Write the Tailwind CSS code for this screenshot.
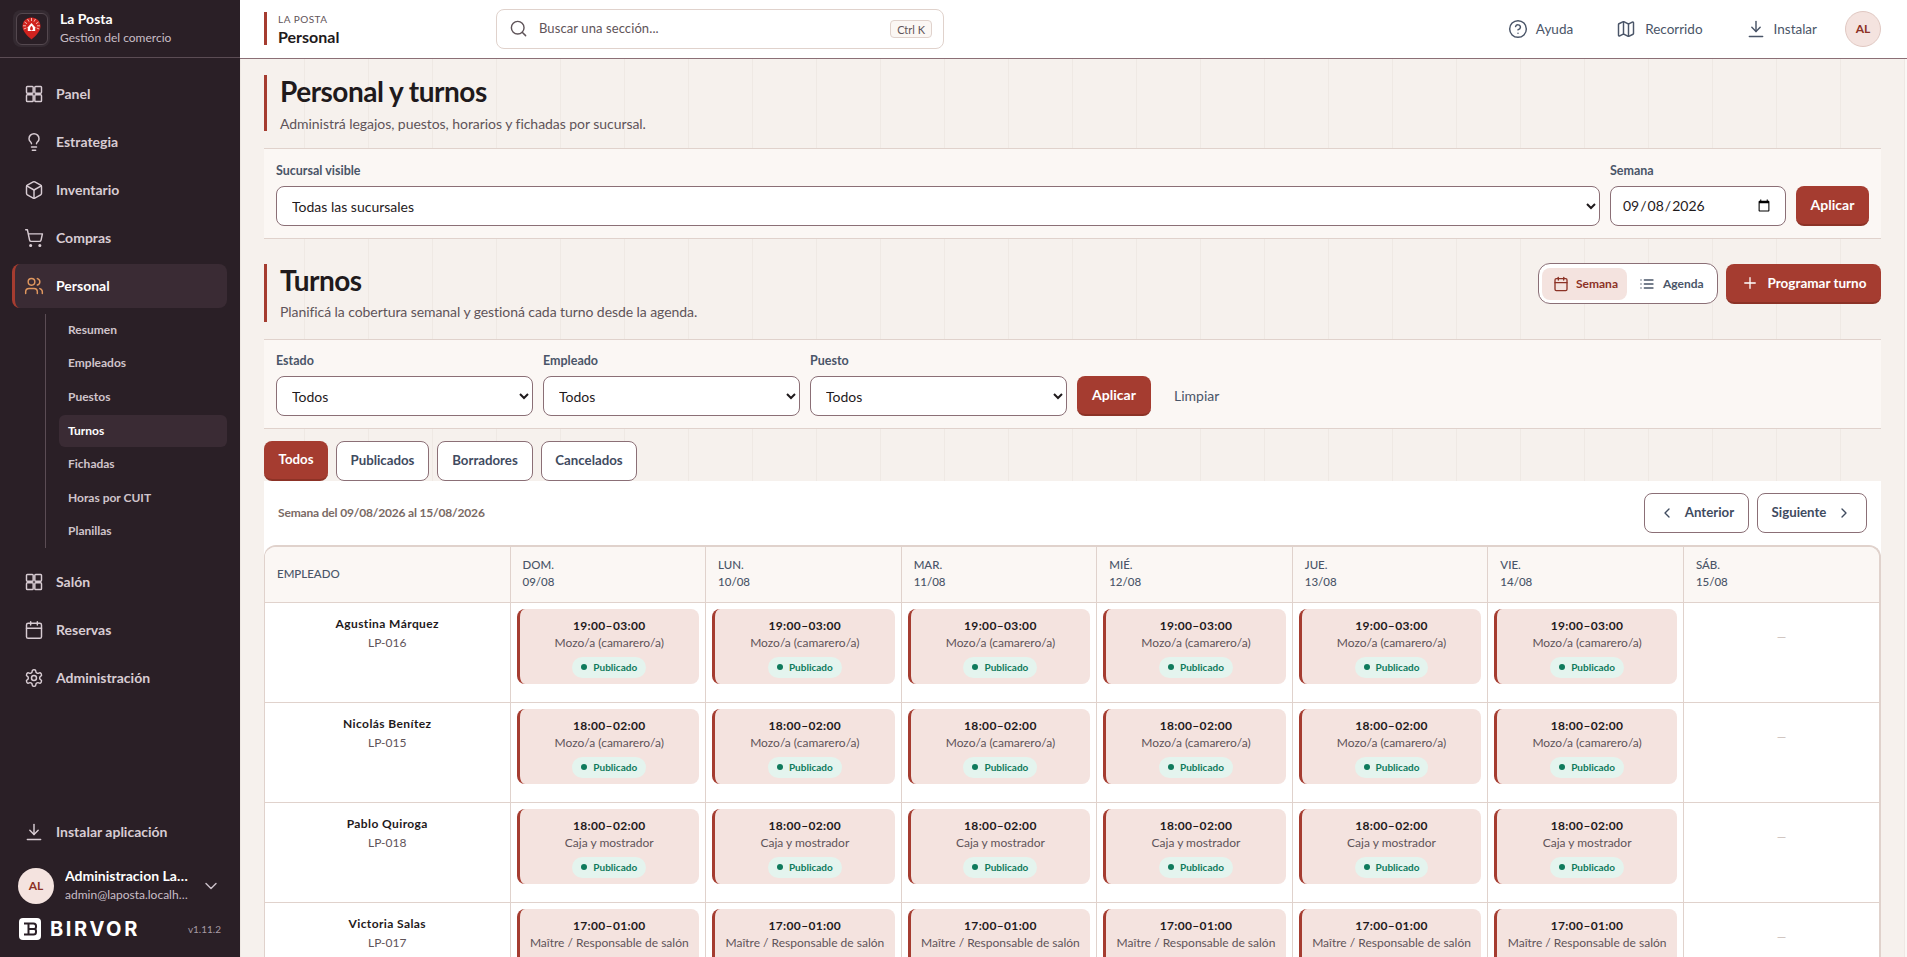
<!DOCTYPE html>
<html lang="es">
<head>
    <meta charset="UTF-8">
    <meta name="viewport" content="width=device-width, initial-scale=1.0">
    <title>Personal y turnos</title>
    <script src="https://cdn.jsdelivr.net/npm/@tailwindcss/browser@4"></script>
</head>
<body class="font-['Lato',sans-serif] h-screen overflow-hidden bg-white flex text-[#1f1a1c]">
    <!-- Sidebar -->
    <aside class="w-[240px] shrink-0 h-full bg-[#2a1f26] flex flex-col">
        <div class="h-[58px] shrink-0 border-b border-[#5b4c54] flex items-center pl-[13px] gap-[10px]">
            <div class="w-[37px] h-[37px] rounded-lg bg-[#342a31] flex items-center justify-center">
                <div class="w-[32px] h-[32px] rounded-md border border-[#54484f] bg-[#2a1f26] flex items-center justify-center">
                    <svg width="19" height="23" viewBox="0 0 19 23"><path d="M9.5 0.5C4.3 0.5 0.5 4.3 0.5 9.3c0 5.200 5 9.800 9 13.200 4-3.400 9-8 9-13.200C18.500 4.300 14.700 0.500 9.500 0.500z" fill="#d0231f"/><path d="M9.500 1v3M5.500 2l1.500 2.600M13.500 2l-1.500 2.600M2.500 5l2.500 1.700M16.500 5 14 6.700M1 8.800h3M18 8.800h-3M1.800 12l2.500-1M17.200 12l-2.500-1" stroke="#f6c9c0" stroke-width="0.900"/><path d="M5.800 14V10.200l3.700-4.200 3.700 4.200V14z" fill="#fff"/><path d="M9.500 8.800c-.9 1.200-1.400 2-1.400 3 0 .9.600 1.700 1.400 1.700s1.400-.8 1.400-1.700c0-1-.5-1.800-1.400-3z" fill="#d0231f"/></svg>
                </div>
            </div>
            <div>
                <div class="text-sm font-bold text-white leading-[18px]">La Posta</div>
                <div class="text-xs text-[#c9bec6] leading-[18px] mt-[1px]">Gestión del comercio</div>
            </div>
        </div>

        <nav class="flex-1 pt-[14px] pl-[12px] pr-[13px] text-sm font-bold text-[#d8ccd3]">
            <a class="h-11 mb-1 flex items-center gap-[12px] pl-[12px]">
                <svg class="w-[20px] h-[20px]" viewBox="0 0 24 24" fill="none" stroke="currentColor" stroke-width="1.750" stroke-linecap="round" stroke-linejoin="round"><rect width="8" height="8" x="3" y="3" rx="1"/><rect width="8" height="8" x="13" y="3" rx="1"/><rect width="8" height="8" x="13" y="13" rx="1"/><rect width="8" height="8" x="3" y="13" rx="1"/></svg>
                Panel
            </a>
            <a class="h-11 mb-1 flex items-center gap-[12px] pl-[12px]">
                <svg class="w-[20px] h-[20px]" viewBox="0 0 24 24" fill="none" stroke="currentColor" stroke-width="1.750" stroke-linecap="round" stroke-linejoin="round"><path d="M15 14c.2-1 .7-1.700 1.500-2.500 1-.9 1.500-2.200 1.500-3.500A6 6 0 0 0 6 8c0 1 .2 2.200 1.500 3.500.7.700 1.300 1.500 1.500 2.500"/><path d="M9 18h6"/><path d="M10 22h4"/></svg>
                Estrategia
            </a>
            <a class="h-11 mb-1 flex items-center gap-[12px] pl-[12px]">
                <svg class="w-[20px] h-[20px]" viewBox="0 0 24 24" fill="none" stroke="currentColor" stroke-width="1.750" stroke-linecap="round" stroke-linejoin="round"><path d="M21 8a2 2 0 0 0-1-1.730l-7-4a2 2 0 0 0-2 0l-7 4A2 2 0 0 0 3 8v8a2 2 0 0 0 1 1.730l7 4a2 2 0 0 0 2 0l7-4A2 2 0 0 0 21 16Z"/><path d="m3.300 7 8.700 5 8.700-5"/><path d="M12 22V12"/></svg>
                Inventario
            </a>
            <a class="h-11 mb-1 flex items-center gap-[12px] pl-[12px]">
                <svg class="w-[20px] h-[20px]" viewBox="0 0 24 24" fill="none" stroke="currentColor" stroke-width="1.750" stroke-linecap="round" stroke-linejoin="round"><circle cx="8" cy="21" r="1"/><circle cx="19" cy="21" r="1"/><path d="M2.050 2.050h2l2.660 12.420a2 2 0 0 0 2 1.580h9.780a2 2 0 0 0 1.950-1.570l1.650-7.430H5.120"/></svg>
                Compras
            </a>
            <a class="h-11 flex items-center gap-[12px] pl-[9px] bg-[#3a2b34] rounded-lg border-l-[3px] border-[#a53c30] text-white">
                <svg class="w-[20px] h-[20px] text-[#e0975f]" viewBox="0 0 24 24" fill="none" stroke="currentColor" stroke-width="1.750" stroke-linecap="round" stroke-linejoin="round"><path d="M16 21v-2a4 4 0 0 0-4-4H6a4 4 0 0 0-4 4v2"/><circle cx="9" cy="7" r="4"/><path d="M22 21v-2a4 4 0 0 0-3-3.870"/><path d="M16 3.130a4 4 0 0 1 0 7.750"/></svg>
                Personal
            </a>

            <div class="mt-[6px] ml-[33px] border-l border-[#5b4c54] pl-[13px] h-[234px] flex flex-col text-xs text-[#d0c4cb]">
                <a class="h-[33.600px] -mt-[1px] shrink-0 flex items-center pl-[9px]">Resumen</a>
                <a class="h-[33.600px] shrink-0 flex items-center pl-[9px]">Empleados</a>
                <a class="h-[33.600px] shrink-0 flex items-center pl-[9px]">Puestos</a>
                <a class="h-[32px] my-[0.800px] shrink-0 flex items-center pl-[9px] bg-[#3a2b34] rounded-md text-white">Turnos</a>
                <a class="h-[33.600px] shrink-0 flex items-center pl-[9px]">Fichadas</a>
                <a class="h-[33.600px] shrink-0 flex items-center pl-[9px]">Horas por CUIT</a>
                <a class="h-[33.600px] shrink-0 flex items-center pl-[9px]">Planillas</a>
            </div>

            <a class="h-11 mt-[12px] mb-1 flex items-center gap-[12px] pl-[12px]">
                <svg class="w-[20px] h-[20px]" viewBox="0 0 24 24" fill="none" stroke="currentColor" stroke-width="1.750" stroke-linecap="round" stroke-linejoin="round"><rect width="8" height="8" x="3" y="3" rx="1"/><rect width="8" height="8" x="13" y="3" rx="1"/><rect width="8" height="8" x="13" y="13" rx="1"/><rect width="8" height="8" x="3" y="13" rx="1"/></svg>
                Salón
            </a>
            <a class="h-11 mb-1 flex items-center gap-[12px] pl-[12px]">
                <svg class="w-[20px] h-[20px]" viewBox="0 0 24 24" fill="none" stroke="currentColor" stroke-width="1.750" stroke-linecap="round" stroke-linejoin="round"><path d="M8 2v4"/><path d="M16 2v4"/><rect width="18" height="18" x="3" y="4" rx="2"/><path d="M3 10h18"/></svg>
                Reservas
            </a>
            <a class="h-11 flex items-center gap-[12px] pl-[12px]">
                <svg class="w-[20px] h-[20px]" viewBox="0 0 24 24" fill="none" stroke="currentColor" stroke-width="1.750" stroke-linecap="round" stroke-linejoin="round"><path d="M12.220 2h-.44a2 2 0 0 0-2 2v.18a2 2 0 0 1-1 1.730l-.43.25a2 2 0 0 1-2 0l-.15-.08a2 2 0 0 0-2.730.73l-.22.38a2 2 0 0 0 .73 2.730l.15.1a2 2 0 0 1 1 1.720v.51a2 2 0 0 1-1 1.740l-.15.09a2 2 0 0 0-.73 2.730l.22.38a2 2 0 0 0 2.730.73l.15-.08a2 2 0 0 1 2 0l.43.25a2 2 0 0 1 1 1.730V20a2 2 0 0 0 2 2h.44a2 2 0 0 0 2-2v-.18a2 2 0 0 1 1-1.730l.43-.25a2 2 0 0 1 2 0l.15.08a2 2 0 0 0 2.730-.73l.22-.39a2 2 0 0 0-.73-2.730l-.15-.08a2 2 0 0 1-1-1.740v-.5a2 2 0 0 1 1-1.740l.15-.09a2 2 0 0 0 .73-2.730l-.22-.38a2 2 0 0 0-2.730-.73l-.15.08a2 2 0 0 1-2 0l-.43-.25a2 2 0 0 1-1-1.730V4a2 2 0 0 0-2-2z"/><circle cx="12" cy="12" r="3"/></svg>
                Administración
            </a>
        </nav>

        <div class="shrink-0 h-[147px] px-[18px] relative">
            <a class="h-[44px] flex items-center gap-[12px] pl-[6px] text-sm font-bold text-[#d8ccd3]">
                <svg class="w-[20px] h-[20px]" viewBox="0 0 24 24" fill="none" stroke="currentColor" stroke-width="1.750" stroke-linecap="round" stroke-linejoin="round"><path d="M12 3v12"/><path d="m7 10 5 5 5-5"/><path d="M4 21h16"/></svg>
                Instalar aplicación
            </a>
            <div class="mt-[13px] flex items-center">
                <div class="w-[36px] h-[36px] rounded-full bg-[#f4e3df] flex items-center justify-center text-xs font-bold text-[#8c3226]">AL</div>
                <div class="ml-[11px] w-[125px]">
                    <div class="text-sm font-bold text-white leading-[18px] truncate">Administracion La Posta</div>
                    <div class="text-xs text-[#c9bec6] leading-[18px] mt-[1px] truncate">admin@laposta.localhost</div>
                </div>
                <svg class="w-[20px] h-[20px] ml-[11px] text-[#c9bec6]" viewBox="0 0 24 24" fill="none" stroke="currentColor" stroke-width="1.750" stroke-linecap="round" stroke-linejoin="round"><path d="m6 9 6 6 6-6"/></svg>
            </div>
            <div class="mt-[14px] flex items-center">
                <svg class="w-[22px] h-[22px] ml-[1px]" viewBox="0 0 22 22"><rect width="22" height="22" rx="4" fill="#fff"/><path d="M5 5.500h9.500a2.500 2.500 0 0 1 2.500 2.500v1a2 2 0 0 1-2 2H9M15 11a2 2 0 0 1 2 2v1a2.500 2.500 0 0 1-2.500 2.500H5M9.500 5.500v11" fill="none" stroke="#2a1f26" stroke-width="2"/></svg>
                <span class="ml-[9px] text-[20px] leading-none font-bold tracking-[2.600px] text-white font-['Inter',sans-serif]">BIRVOR</span>
                <span class="ml-auto text-[10px] text-[#a79aa3] mr-[1px]">v1.11.2</span>
            </div>
        </div>
    </aside>

    <!-- Main column -->
    <div class="flex-1 min-w-0 h-full flex flex-col">
        <header class="h-[59px] shrink-0 bg-white border-b border-[#8b6f76] flex items-center pl-[24px] pr-[26px]">
            <div class="border-l-[3px] border-[#a53c30] pl-[11px] h-[33px] -mt-[1px] w-[232px] flex flex-col justify-center">
                <div class="text-[10px] tracking-[0.500px] text-[#5f5459] leading-[15px]">LA POSTA</div>
                <div class="text-base font-bold leading-[19px]">Personal</div>
            </div>
            <div class="w-[448px] h-[40px] -mt-[1px] rounded-lg border border-[#e0d2cc] flex items-center pl-[12px] pr-[11px]">
                <svg class="w-[19px] h-[19px] text-[#5f5459]" viewBox="0 0 24 24" fill="none" stroke="currentColor" stroke-width="1.800" stroke-linecap="round" stroke-linejoin="round"><circle cx="11" cy="11" r="8"/><path d="m21 21-4.300-4.300"/></svg>
                <span class="ml-[11px] text-[13px] tracking-[0.100px] text-[#5f5459]">Buscar una sección...</span>
                <span class="ml-auto text-[11px] px-[6px] h-[18px] leading-[17px] rounded border border-[#e0d2cc] bg-[#fbf7f4] text-[#5f5459]">Ctrl K</span>
            </div>
            <div class="ml-auto flex items-center text-[13.500px] text-[#4a5568]">
                <svg class="w-[20px] h-[20px]" viewBox="0 0 24 24" fill="none" stroke="currentColor" stroke-width="1.750" stroke-linecap="round" stroke-linejoin="round"><circle cx="12" cy="12" r="10"/><path d="M9.090 9a3 3 0 0 1 5.830 1c0 2-3 3-3 3"/><path d="M12 17h.010"/></svg>
                <span class="ml-[8px]">Ayuda</span>
                <svg class="w-[20px] h-[20px] ml-[43px]" viewBox="0 0 24 24" fill="none" stroke="currentColor" stroke-width="1.750" stroke-linecap="round" stroke-linejoin="round"><path d="M14.106 5.553a2 2 0 0 0 1.788 0l3.659-1.830A1 1 0 0 1 21 4.619v12.764a1 1 0 0 1-.553.894l-4.553 2.277a2 2 0 0 1-1.788 0l-4.212-2.106a2 2 0 0 0-1.788 0l-3.659 1.830A1 1 0 0 1 3 19.381V6.618a1 1 0 0 1 .553-.894l4.553-2.277a2 2 0 0 1 1.788 0z"/><path d="M15 5.764v15"/><path d="M9 3.236v15"/></svg>
                <span class="ml-[9px]">Recorrido</span>
                <svg class="w-[20px] h-[20px] ml-[43px]" viewBox="0 0 24 24" fill="none" stroke="currentColor" stroke-width="1.750" stroke-linecap="round" stroke-linejoin="round"><path d="M12 3v12"/><path d="m7 10 5 5 5-5"/><path d="M4 21h16"/></svg>
                <span class="ml-[8px]">Instalar</span>
                <div class="ml-[28px] w-[36px] h-[36px] rounded-full bg-[#f4e3df] border border-[#e0c8c2] flex items-center justify-center text-xs font-bold text-[#8c3226]">AL</div>
            </div>
        </header>

        <main class="flex-1 min-h-0 overflow-hidden pl-[24px] pr-[24px] bg-[#f6f1ed] bg-[linear-gradient(to_right,#efe9e4_1px,transparent_1px)] bg-[size:64px_64px] border-r-2 border-[#fbf8f6]">
            <section class="mt-[18px] h-[56px] border-l-[3px] border-[#a53c30] pl-[13px]">
                <h1 class="text-[28px] font-bold leading-[32px] tracking-[-0.500px] -mt-[2px]">Personal y turnos</h1>
                <p class="text-sm tracking-[-0.050px] text-[#5f5459] leading-[20px] mt-[7px]">Administrá legajos, puestos, horarios y fichadas por sucursal.</p>
            </section>

            <form class="mt-[17px] h-[91px] bg-[#fbf7f4] border-y border-[#e0d2cc] px-[12px] flex items-end pb-[12px] gap-[10px]">
                <label class="flex-1 block">
                    <span class="block text-[12.500px] font-bold text-[#4a5568] leading-[16px] mb-[7px]">Sucursal visible</span>
                    <select class="w-full h-[40px] rounded-lg border border-[#8b6f76] bg-white pl-[11px] text-sm"><option>Todas las sucursales</option></select>
                </label>
                <label class="w-[176px] block">
                    <span class="block text-[12.500px] font-bold text-[#4a5568] leading-[16px] mb-[7px]">Semana</span>
                    <input type="date" value="2026-09-08" class="w-full h-[40px] rounded-lg border border-[#8b6f76] bg-white pl-[11px] pr-[12px] text-sm">
                </label>
                <button type="button" class="w-[73px] h-[40px] rounded-lg bg-[#a53c30] border-b-2 border-[#8c3226] text-white text-sm font-bold">Aplicar</button>
            </form>

            <section class="mt-[25px] h-[58px] flex items-start">
                <div class="flex-1 border-l-[3px] border-[#a53c30] pl-[13px] h-[58px]">
                    <h2 class="text-[28px] font-bold leading-[32px] tracking-[-0.500px]">Turnos</h2>
                    <p class="text-sm tracking-[-0.070px] text-[#5f5459] leading-[20px] mt-[6px]">Planificá la cobertura semanal y gestioná cada turno desde la agenda.</p>
                </div>
                <div class="w-[180px] h-[41px] -mt-[1px] rounded-xl border border-[#8b6f76] bg-white flex items-center pl-[3px] text-xs font-bold">
                    <span class="w-[85px] h-[32px] rounded-lg bg-[#f4e3df] text-[#8c3226] flex items-center pl-[11px] gap-[7px]">
                        <svg class="w-[16px] h-[16px]" viewBox="0 0 24 24" fill="none" stroke="currentColor" stroke-width="2" stroke-linecap="round" stroke-linejoin="round"><path d="M8 2v4"/><path d="M16 2v4"/><rect width="18" height="18" x="3" y="4" rx="2"/><path d="M3 10h18"/></svg>
                        Semana
                    </span>
                    <span class="flex items-center pl-[12px] gap-[8px] text-[#4a5568]">
                        <svg class="w-[16px] h-[16px]" viewBox="0 0 24 24" fill="none" stroke="currentColor" stroke-width="2" stroke-linecap="round" stroke-linejoin="round"><path d="M3 6h.010"/><path d="M8 6h13"/><path d="M3 12h.010"/><path d="M8 12h13"/><path d="M3 18h.010"/><path d="M8 18h13"/></svg>
                        Agenda
                    </span>
                </div>
                <button type="button" class="ml-[8px] w-[155px] h-[40px] rounded-lg bg-[#a53c30] border-b-2 border-[#8c3226] text-white text-[13.500px] font-bold flex items-center justify-center gap-[9px]">
                    <svg class="w-[18px] h-[18px]" viewBox="0 0 24 24" fill="none" stroke="currentColor" stroke-width="1.750" stroke-linecap="round" stroke-linejoin="round"><path d="M5 12h14"/><path d="M12 5v14"/></svg>
                    Programar turno
                </button>
            </section>

            <form class="mt-[17px] h-[90px] bg-[#fbf7f4] border-y border-[#e0d2cc] px-[12px] flex items-end pb-[12px] gap-[10px]">
                <label class="w-[257px] block">
                    <span class="block text-[12.500px] font-bold text-[#4a5568] leading-[16px] mb-[7px]">Estado</span>
                    <select class="w-full h-[40px] rounded-lg border border-[#8b6f76] bg-white pl-[11px] text-sm"><option>Todos</option></select>
                </label>
                <label class="w-[257px] block">
                    <span class="block text-[12.500px] font-bold text-[#4a5568] leading-[16px] mb-[7px]">Empleado</span>
                    <select class="w-full h-[40px] rounded-lg border border-[#8b6f76] bg-white pl-[11px] text-sm"><option>Todos</option></select>
                </label>
                <label class="w-[257px] block">
                    <span class="block text-[12.500px] font-bold text-[#4a5568] leading-[16px] mb-[7px]">Puesto</span>
                    <select class="w-full h-[40px] rounded-lg border border-[#8b6f76] bg-white pl-[11px] text-sm"><option>Todos</option></select>
                </label>
                <button type="button" class="w-[74px] h-[40px] rounded-lg bg-[#a53c30] border-b-2 border-[#8c3226] text-white text-sm font-bold">Aplicar</button>
                <span class="ml-[13px] h-[40px] flex items-center text-sm text-[#4a5568]">Limpiar</span>
            </form>

            <div class="mt-[12px] flex gap-[8px] text-[13.250px] font-bold text-[#3f4b5f]">
                <span class="w-[64px] h-[40px] rounded-lg bg-[#a53c30] border-b-2 border-[#8c3226] text-white flex items-center justify-center">Todos</span>
                <span class="w-[93px] h-[40px] rounded-lg bg-white border border-[#8b6f76] flex items-center justify-center">Publicados</span>
                <span class="w-[96px] h-[40px] rounded-lg bg-white border border-[#8b6f76] flex items-center justify-center">Borradores</span>
                <span class="w-[96px] h-[40px] rounded-lg bg-white border border-[#8b6f76] flex items-center justify-center">Cancelados</span>
            </div>

            <div class="bg-white">
                <div class="h-[64px] flex items-center pl-[14px] pr-[14px]">
                    <span class="text-xs font-bold tracking-[-0.170px] text-[#7a6a65]">Semana del 09/08/2026 al 15/08/2026</span>
                    <span class="ml-auto w-[105px] h-[40px] rounded-lg border border-[#8b6f76] flex items-center justify-center gap-[10px] text-[13.250px] font-bold text-[#3f4b5f]">
                        <svg class="w-[16px] h-[16px]" viewBox="0 0 24 24" fill="none" stroke="currentColor" stroke-width="2" stroke-linecap="round" stroke-linejoin="round"><path d="m15 18-6-6 6-6"/></svg>
                        Anterior
                    </span>
                    <span class="ml-[8px] w-[110px] h-[40px] rounded-lg border border-[#8b6f76] flex items-center justify-center gap-[10px] text-[13.250px] font-bold text-[#3f4b5f]">
                        Siguiente
                        <svg class="w-[16px] h-[16px]" viewBox="0 0 24 24" fill="none" stroke="currentColor" stroke-width="2" stroke-linecap="round" stroke-linejoin="round"><path d="m9 18 6-6-6-6"/></svg>
                    </span>
                </div>
                <div class="border-t-2 border-r-2 border-l border-[#e0d2cc] rounded-t-xl overflow-hidden">
                    <table class="w-full table-fixed border-collapse">
                        <thead>
                            <tr class="h-[55px] bg-[#fbf7f4] text-[11.500px] text-[#4a5568] text-left">
                                <th class="w-[245px] font-medium pl-[12px] pb-[2px] border-b border-[#e0d2cc]">EMPLEADO</th>
                                <th class="font-medium pl-[12px] pb-[2px] border-l border-b border-[#e0d2cc] leading-[17px]">DOM.<br>09/08</th>
                                <th class="font-medium pl-[12px] pb-[2px] border-l border-b border-[#e0d2cc] leading-[17px]">LUN.<br>10/08</th>
                                <th class="font-medium pl-[12px] pb-[2px] border-l border-b border-[#e0d2cc] leading-[17px]">MAR.<br>11/08</th>
                                <th class="font-medium pl-[12px] pb-[2px] border-l border-b border-[#e0d2cc] leading-[17px]">MIÉ.<br>12/08</th>
                                <th class="font-medium pl-[12px] pb-[2px] border-l border-b border-[#e0d2cc] leading-[17px]">JUE.<br>13/08</th>
                                <th class="font-medium pl-[12px] pb-[2px] border-l border-b border-[#e0d2cc] leading-[17px]">VIE.<br>14/08</th>
                                <th class="font-medium pl-[12px] pb-[2px] border-l border-b border-[#e0d2cc] leading-[17px]">SÁB.<br>15/08</th>
                            </tr>
                        </thead>
                        <tbody id="rows"></tbody>
                    </table>
                </div>
            </div>
        </main>
    </div>

    <script>
        const staff = [
            { name: 'Agustina Márquez', code: 'LP-016', time: '19:00–03:00', role: 'Mozo/a (camarero/a)' },
            { name: 'Nicolás Benítez', code: 'LP-015', time: '18:00–02:00', role: 'Mozo/a (camarero/a)' },
            { name: 'Pablo Quiroga', code: 'LP-018', time: '18:00–02:00', role: 'Caja y mostrador' },
            { name: 'Victoria Salas', code: 'LP-017', time: '17:00–01:00', role: 'Maître / Responsable de salón' },
        ];

        function shiftCell(s) {
            return `
                <td class="border-l border-b border-[#e0d2cc] align-top px-[6px] pt-[6px]">
                    <div class="h-[75px] rounded-lg bg-[#f4e3df] border-l-[3px] border-[#a53c30] text-center pt-[9px]">
                        <div class="text-xs font-bold tracking-[0.350px] leading-[16px]">${s.time}</div>
                        <div class="text-xs text-[#5f5459] leading-[18px] whitespace-nowrap">${s.role}</div>
                        <span class="mt-[5px] inline-flex items-center h-[21px] px-[9px] gap-[6px] rounded-full bg-[#e4f4ee] text-[10px] font-bold text-[#0f7a5c]"><i class="w-[6px] h-[6px] rounded-full bg-[#0f7a5c]"></i>Publicado</span>
                    </div>
                </td>`;
        }

        document.getElementById('rows').innerHTML = staff.map((s) => `
            <tr class="h-[100px]">
                <td class="border-b border-[#e0d2cc] align-top text-center pt-[12px]">
                    <div class="text-xs font-bold tracking-[0.400px] leading-[18px]">${s.name}</div>
                    <div class="text-xs text-[#5f5459] leading-[20px]">${s.code}</div>
                </td>
                ${Array(6).fill(0).map(() => shiftCell(s)).join('')}
                <td class="border-l border-b border-[#e0d2cc] align-top text-center pt-[26px] text-xs text-[#c9bcb6]">—</td>
            </tr>`).join('');
    </script>
</body>
</html>
